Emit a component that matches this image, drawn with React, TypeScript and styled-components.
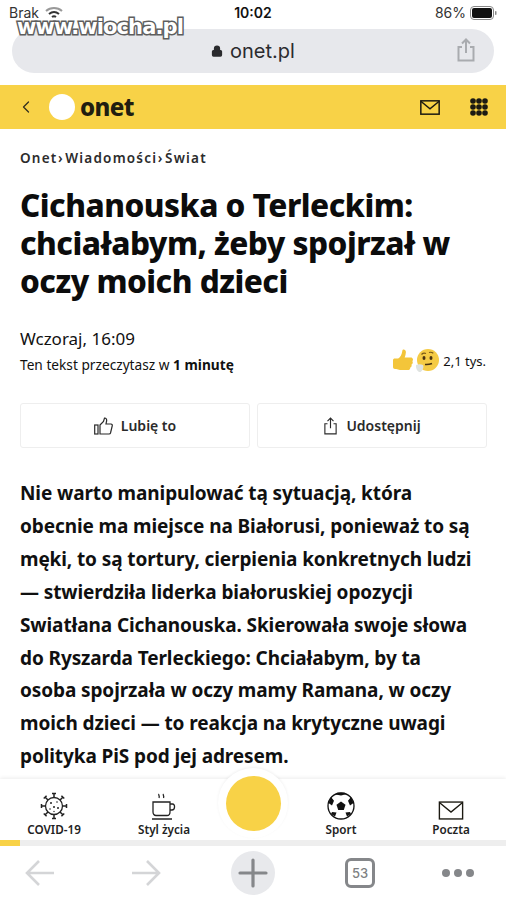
import React from 'react';
import styled, { createGlobalStyle } from 'styled-components';
import { ChevronLeft, Lock } from 'lucide-react';

const yellow = '#f8d247';
const ink = '#111';

const Global = createGlobalStyle`
  html, body { margin: 0; padding: 0; background: #fff; }
  body { font-family: "Noto Sans", "Open Sans", sans-serif; color: ${ink}; }
`;

const Page = styled.div`
  width: 506px;
  height: 900px;
  display: flex;
  flex-direction: column;
  overflow: hidden;
  position: relative;
  background: #fff;
`;

const StatusBar = styled.div`
  height: 29px;
  padding: 0 9px 3px 9px;
  display: grid;
  grid-template-columns: 1fr auto 1fr;
  align-items: center;
  box-sizing: border-box;
  font-family: Inter, sans-serif;
  font-size: 14px;
  line-height: 18px;
`;

const Carrier = styled.div`
  display: flex;
  align-items: center;
  gap: 6px;
  color: #333;
`;

const Clock = styled.div`
  font-weight: 600;
`;

const Battery = styled.div`
  justify-self: end;
  display: flex;
  align-items: center;
  gap: 4px;
  color: #333;
`;

const Watermark = styled.div`
  position: absolute;
  left: 17px;
  top: 10px;
  font-family: "DejaVu Sans", sans-serif;
  font-weight: 700;
  font-size: 21px;
  line-height: 34px;
  letter-spacing: -0.9px;
  color: #fff;
  -webkit-text-stroke: 3px #5e5e5e;
  paint-order: stroke fill;
  z-index: 2;
`;

const UrlBar = styled.div`
  margin: 0 12px;
  height: 44px;
  flex: none;
  border-radius: 22px;
  background: #e7e8ec;
  position: relative;
  display: flex;
  align-items: center;
  justify-content: center;
  gap: 7px;
  font-family: Inter, sans-serif;
  font-size: 20px;
  color: #2b2b2e;
`;

const UrlShare = styled.span`
  position: absolute;
  right: 18px;
  top: 9px;
  display: flex;
`;

const SiteHeader = styled.header`
  margin-top: 12px;
  height: 44px;
  flex: none;
  background: ${yellow};
  display: flex;
  align-items: center;
  padding: 0 18px 0 16px;
`;

const LogoDot = styled.span`
  width: 26px;
  height: 26px;
  border-radius: 50%;
  background: #fff;
  margin-left: 13px;
`;

const LogoText = styled.span`
  font-family: "Noto Sans", sans-serif;
  font-weight: 800;
  font-size: 24px;
  line-height: 26px;
  letter-spacing: -0.6px;
  margin-left: 5px;
  color: #211d10;
  flex: 1;
`;

const HeaderIcons = styled.div`
  display: flex;
  align-items: center;
  gap: 30px;
`;

const Article = styled.main`
  padding: 20px 20px 0;
  flex: 1;
  min-height: 0;
`;

const Crumbs = styled.div`
  font-size: 13.5px;
  font-weight: 600;
  line-height: 18px;
  letter-spacing: 1.2px;
  color: #2c2c2c;
`;

const CrumbSep = styled.span`
  padding: 0 1.5px 0 0.5px;
`;

const Title = styled.h1`
  margin: 19px 0 0;
  font-family: "Noto Sans", sans-serif;
  font-weight: 800;
  font-size: 31.5px;
  line-height: 38px;
  letter-spacing: -0.5px;
  color: #0c0c0c;
`;

const Meta = styled.div`
  margin-top: 28px;
  display: flex;
  justify-content: space-between;
  align-items: flex-end;
`;

const DateLine = styled.div`
  font-size: 17px;
  line-height: 22px;
`;

const ReadTime = styled.div`
  font-size: 13.7px;
  line-height: 20px;
  margin-top: 5px;
  b { font-weight: 700; }
`;

const Reactions = styled.div`
  display: flex;
  align-items: center;
  font-size: 13px;
  line-height: 20px;
  gap: 3px;
  margin-bottom: 1px;
`;

const Emojis = styled.span`
  display: flex;
`;

const Actions = styled.div`
  margin-top: 28px;
  display: grid;
  grid-template-columns: 230px 230px;
  gap: 7px;
`;

const ActionButton = styled.button`
  height: 45px;
  border: 1px solid #eeeeee;
  border-radius: 3px;
  background: #fff;
  display: flex;
  align-items: center;
  justify-content: center;
  gap: 8px;
  font-family: inherit;
  font-size: 14px;
  font-weight: 600;
  color: #2a2a2a;
  padding: 0;
`;

const Lead = styled.p`
  margin: 29px 0 0;
  font-size: 19px;
  font-weight: 700;
  line-height: 32.9px;
  letter-spacing: -0.1px;
  color: #101010;
`;

const BottomNav = styled.nav`
  position: absolute;
  left: 0;
  right: 0;
  top: 779px;
  height: 61px;
  background: #fff;
  box-shadow: 0 -1px 4px rgba(0, 0, 0, 0.08);
  display: grid;
  grid-template-columns: 108px 112px 66px 110px 110px;
  z-index: 1;
`;

const NavItem = styled.div`
  display: flex;
  flex-direction: column;
  align-items: center;
  justify-content: flex-end;
  gap: 1px;
  height: 58px;
  font-size: 11.7px;
  font-weight: 600;
  line-height: 16px;
  color: #222;
`;

const NavBubble = styled.div`
  position: absolute;
  left: 218px;
  top: -11px;
  width: 70px;
  height: 70px;
  border-radius: 50%;
  background: #fff;
  box-shadow: 0 -1px 3px rgba(0, 0, 0, 0.06);
  display: flex;
  align-items: center;
  justify-content: center;
  &::after {
    content: '';
    width: 55px;
    height: 55px;
    border-radius: 50%;
    background: ${yellow};
  }
`;

const Progress = styled.div`
  position: absolute;
  left: 0;
  right: 0;
  top: 840px;
  height: 6px;
  background: #eeeeee;
  z-index: 1;
  &::before {
    content: '';
    display: block;
    width: 20px;
    height: 100%;
    background: ${yellow};
  }
`;

const Toolbar = styled.div`
  position: absolute;
  left: 0;
  right: 0;
  top: 846px;
  height: 54px;
  background: #fff;
  z-index: 1;
  display: grid;
  grid-template-columns: 79px 134px 80px 134px 62px;
  align-items: center;
`;

const ToolCell = styled.div`
  display: flex;
  justify-content: center;
  align-items: center;
  height: 54px;
`;

const PlusRound = styled.span`
  width: 44px;
  height: 44px;
  border-radius: 50%;
  background: #e8e9ec;
  display: flex;
  align-items: center;
  justify-content: center;
`;

const TabCount = styled.span`
  width: 24px;
  height: 24px;
  border: 3px solid #85878a;
  border-radius: 6px;
  display: flex;
  align-items: center;
  justify-content: center;
  font-family: Inter, sans-serif;
  font-size: 13px;
  font-weight: 500;
  color: #7d7f82;
`;

const Dots = styled.span`
  display: flex;
  gap: 4px;
  i {
    width: 8px;
    height: 8px;
    border-radius: 50%;
    background: #85878a;
  }
`;

const ArrowSvg = styled.svg<{ $flip?: boolean }>`
  transform: ${p => (p.$flip ? 'scaleX(-1)' : 'none')};
`;

const Wifi = () => (
  <svg width="18" height="14" viewBox="0 0 18 14" fill="none" stroke="#333" strokeWidth="2">
    <path d="M1 5c4.500-4 11.500-4 16 0" stroke="#999" />
    <path d="M4 8c3-2.500 7-2.500 10 0" />
    <path d="M7 11c1.200-.9 2.800-.9 4 0" />
  </svg>
);

const BatteryIcon = () => (
  <svg width="27" height="14" viewBox="0 0 27 14">
    <rect x="0.500" y="0.500" width="23" height="13" rx="3.500" fill="none" stroke="#888" />
    <rect x="2" y="2" width="20" height="10" rx="2" fill="#111" />
    <rect x="25" y="5" width="1.500" height="4" rx="0.700" fill="#888" />
  </svg>
);

const ShareIcon = ({ size, color, weight }: { size: number; color: string; weight: number }) => (
  <svg width={size} height={size * 1.2} viewBox="0 0 20 24" fill="none" stroke={color} strokeWidth={weight}>
    <path d="M6 9H2.500v13.500h15V9H14" />
    <path d="M10 15V1.500M6 5.500l4-4 4 4" />
  </svg>
);

const Envelope = ({ w, h, weight }: { w: number; h: number; weight: number }) => (
  <svg width={w} height={h} viewBox="0 0 24 18" fill="none" stroke="#1c1a12" strokeWidth={weight}>
    <rect x="1" y="1" width="22" height="16" />
    <path d="M1 1.500l11 9 11-9" />
  </svg>
);

const GridDots = () => (
  <svg width="18" height="18" viewBox="0 0 18 18" fill="#1c1a12">
    {[3, 9, 15].flatMap(y => [3, 9, 15].map(x => <circle key={`${x}-${y}`} cx={x} cy={y} r="2.800" />))}
  </svg>
);

const ThumbOutline = () => (
  <svg width="19" height="18" viewBox="0 0 19 18" fill="none" stroke="#2a2a2a" strokeWidth="1.200">
    <rect x="0.700" y="8" width="3.300" height="9" />
    <path d="M6 8l3.500-3.500L10.500 1c1.800 0 2.500 1.500 2 3.500L12 7h5c1 0 1.500.9 1.200 2l-1.700 7c-.2.700-.7 1-1.400 1H6z" />
  </svg>
);

const ThumbEmoji = () => (
  <svg width="22" height="24" viewBox="0 0 22 24">
    <path d="M1 12c0-1 .8-1.600 1.800-1.600h3.400c2.400-1.500 3.600-4 4.200-8 .2-1.400 3.600-1.400 3.500 1.800-.1 2-.6 3.700-1.200 5.200h6c2.400 0 2.900 2.600 1.600 3.600 1 1.300.4 3-.8 3.400.5 1.500-.2 2.800-1.300 3 .2 1.500-.6 2.600-2.200 2.600H8c-1.600 0-2.400-1-3.800-1H3c-1.200 0-2-.8-2-2z" fill="#f3c53a" />
  </svg>
);

const ThinkEmoji = () => (
  <svg width="26" height="26" viewBox="0 0 24 26">
    <circle cx="13" cy="12" r="11" fill="#f5cb45" />
    <ellipse cx="9" cy="10" rx="1.500" ry="2" fill="#4a3310" />
    <ellipse cx="16" cy="10" rx="1.500" ry="2" fill="#4a3310" />
    <path d="M6.500 6.500c1.200-1.200 3-1.500 4.500-1M14 4.500c1.500-.5 3-.2 4.300.8" fill="none" stroke="#7a5a18" strokeWidth="1.200" />
    <path d="M10 16.500c2.500.3 4.500 0 7-1" fill="none" stroke="#4a3310" strokeWidth="1.500" />
    <path d="M1 17c2-1 5-1 7 0 1 1.800 0 5.500-2.500 7C3 24.500.5 21 1 17z" fill="#dfe3e0" />
  </svg>
);

const Virus = () => (
  <svg width="28" height="28" viewBox="0 0 28 28" fill="none" stroke="#222" strokeWidth="1.300">
    <circle cx="14" cy="14" r="8.500" />
    {[0, 45, 90, 135, 180, 225, 270, 315].map(a => (
      <g key={a} transform={`rotate(${a} 14 14)`}>
        <path d="M14 5.500V1.500M12 1.500h4" strokeWidth="1.500" />
      </g>
    ))}
    <g fill="#222" stroke="none">
      <circle cx="11" cy="11" r="1" />
      <circle cx="17" cy="10" r="0.800" />
      <circle cx="14" cy="15" r="1" />
      <circle cx="18" cy="16" r="1" />
      <circle cx="10" cy="17" r="0.800" />
      <circle cx="14" cy="19.500" r="0.700" />
    </g>
  </svg>
);

const Coffee = () => (
  <svg width="24" height="27" viewBox="0 0 24 27" fill="none" stroke="#222" strokeWidth="1.300">
    <path d="M1 9h17v10c0 2-1.200 3.500-3 3.500H4c-1.800 0-3-1.500-3-3.500z" />
    <path d="M18 11h2.500c2.800 0 2.800 6-.5 6H18" />
    <path d="M0 26h20" strokeWidth="1.500" />
    <path d="M7 1c-1 1 1 2 0 4M11.500 1c-1 1 1 2 0 4" />
  </svg>
);

const Ball = () => (
  <svg width="28" height="28" viewBox="0 0 28 28">
    <circle cx="14" cy="14" r="13" fill="#fff" stroke="#111" strokeWidth="1.300" />
    <path d="M14 9.500l4.500 3.200-1.700 5.300h-5.600l-1.700-5.300z" fill="#111" />
    <path d="M8.500 2.500l5.500 1 5-1.300-1-1.400h-8zM1.500 11l3.500 2.500 2-4.800L4 5zM26.500 11L23 13.500l-2-4.800L24 5zM8 24.500l1.500-4-4.500-.5-1 2zM20 24.500l-1.500-4 4.500-.5 1 2z" fill="#111" />
  </svg>
);

const Arrow = ({ flip }: { flip?: boolean }) => (
  <ArrowSvg $flip={flip} width="30" height="28" viewBox="0 0 30 28" fill="none" stroke="#d4d5d7" strokeWidth="2.600">
    <path d="M29 14H2M14 2L2 14l12 12" />
  </ArrowSvg>
);

const Plus = () => (
  <svg width="30" height="30" viewBox="0 0 30 30" stroke="#85878a" strokeWidth="3.200" strokeLinecap="round">
    <path d="M15 2v26M2 15h26" />
  </svg>
);

export default function App() {
  return (
    <Page>
      <Global />
      <StatusBar>
        <Carrier>
          Brak <Wifi />
        </Carrier>
        <Clock>10:02</Clock>
        <Battery>
          86% <BatteryIcon />
        </Battery>
      </StatusBar>
      <Watermark>www.wiocha.pl</Watermark>
      <UrlBar>
        <Lock size={12} fill="#2b2b2e" color="#2b2b2e" strokeWidth={2.5} />
        onet.pl
        <UrlShare>
          <ShareIcon size={20} color="#a9abaf" weight={2} />
        </UrlShare>
      </UrlBar>
      <SiteHeader>
        <ChevronLeft size={20} color="#33301f" strokeWidth={1.500} />
        <LogoDot />
        <LogoText>onet</LogoText>
        <HeaderIcons>
          <Envelope w={20} h={15} weight={1.800} />
          <GridDots />
        </HeaderIcons>
      </SiteHeader>
      <Article>
        <Crumbs>
          Onet<CrumbSep>›</CrumbSep>Wiadomości<CrumbSep>›</CrumbSep>Świat
        </Crumbs>
        <Title>
          Cichanouska o Terleckim:
          <br />
          chciałabym, żeby spojrzał w
          <br />
          oczy moich dzieci
        </Title>
        <Meta>
          <div>
            <DateLine>Wczoraj, 16:09</DateLine>
            <ReadTime>
              Ten tekst przeczytasz w <b>1 minutę</b>
            </ReadTime>
          </div>
          <Reactions>
            <Emojis>
              <ThumbEmoji />
              <ThinkEmoji />
            </Emojis>
            2,1 tys.
          </Reactions>
        </Meta>
        <Actions>
          <ActionButton>
            <ThumbOutline />
            Lubię to
          </ActionButton>
          <ActionButton>
            <ShareIcon size={15} color="#2a2a2a" weight={1.500} />
            Udostępnij
          </ActionButton>
        </Actions>
        <Lead>
          Nie warto manipulować tą sytuacją, która
          <br />
          obecnie ma miejsce na Białorusi, ponieważ to są
          <br />
          męki, to są tortury, cierpienia konkretnych ludzi
          <br />— stwierdziła liderka białoruskiej opozycji
          <br />
          Swiatłana Cichanouska. Skierowała swoje słowa
          <br />
          do Ryszarda Terleckiego: Chciałabym, by ta
          <br />
          osoba spojrzała w oczy mamy Ramana, w oczy
          <br />
          moich dzieci — to reakcja na krytyczne uwagi
          <br />
          polityka PiS pod jej adresem.
        </Lead>
      </Article>
      <BottomNav>
        <NavItem>
          <Virus />
          COVID-19
        </NavItem>
        <NavItem>
          <Coffee />
          Styl życia
        </NavItem>
        <div />
        <NavItem>
          <Ball />
          Sport
        </NavItem>
        <NavItem>
          <Envelope w={26} h={19} weight={1.300} />
          Poczta
        </NavItem>
        <NavBubble />
      </BottomNav>
      <Progress />
      <Toolbar>
        <ToolCell>
          <Arrow />
        </ToolCell>
        <ToolCell>
          <Arrow flip />
        </ToolCell>
        <ToolCell>
          <PlusRound>
            <Plus />
          </PlusRound>
        </ToolCell>
        <ToolCell>
          <TabCount>53</TabCount>
        </ToolCell>
        <ToolCell>
          <Dots>
            <i />
            <i />
            <i />
          </Dots>
        </ToolCell>
      </Toolbar>
    </Page>
  );
}
